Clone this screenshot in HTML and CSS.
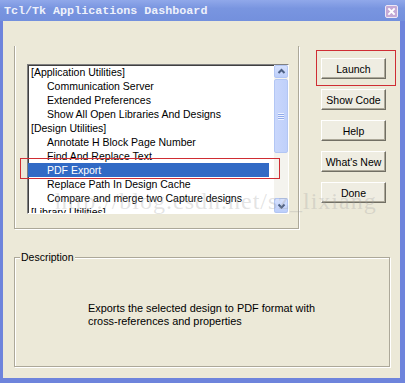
FILE: index.html
```
<!DOCTYPE html>
<html lang="en">
<head>
    <meta charset="UTF-8">
    <meta name="viewport" content="width=device-width, initial-scale=1.0">
    <title>Tcl/Tk Applications Dashboard</title>
    <link rel="stylesheet" href="styles.css">
</head>
<body>
    <div class="window">
        <div class="titlebar">
            <span class="title">Tcl/Tk Applications Dashboard</span>
            <span class="close">
                <svg width="11" height="11" viewBox="0 0 11 11">
                    <path d="M3 3 L8 8 M8 3 L3 8" stroke="#fff" stroke-width="1.8" stroke-linecap="square"/>
                </svg>
            </span>
        </div>

        <div class="client">
            <div class="top-row">
                <div class="apps-frame">
                    <div class="listbox">
                        <ul class="items">
                            <li class="group">[Application Utilities]</li>
                            <li>Communication Server</li>
                            <li>Extended Preferences</li>
                            <li>Show All Open Libraries And Designs</li>
                            <li class="group">[Design Utilities]</li>
                            <li>Annotate H Block Page Number</li>
                            <li>Find And Replace Text</li>
                            <li class="selected">PDF Export</li>
                            <li>Replace Path In Design Cache</li>
                            <li>Compare and merge two Capture designs</li>
                            <li class="group">[Library Utilities]</li>
                        </ul>
                        <div class="scrollbar">
                            <div class="sb-btn">
                                <svg width="11" height="11" viewBox="0 0 11 11">
                                    <path d="M2.5 7 L5.5 4 L8.5 7" fill="none" stroke="#4d6185" stroke-width="2"/>
                                </svg>
                            </div>
                            <div class="sb-thumb">
                                <span class="grip"></span>
                            </div>
                            <div class="sb-track"></div>
                            <div class="sb-btn sb-down">
                                <svg width="11" height="11" viewBox="0 0 11 11">
                                    <path d="M2.5 4.5 L5.5 7.5 L8.5 4.5" fill="none" stroke="#4d6185" stroke-width="2"/>
                                </svg>
                            </div>
                        </div>
                    </div>
                </div>

                <div class="buttons">
                    <button class="btn">Launch</button>
                    <button class="btn">Show Code</button>
                    <button class="btn">Help</button>
                    <button class="btn">What's New</button>
                    <button class="btn">Done</button>
                </div>
            </div>

            <div class="desc-frame">
                <span class="desc-label">Description</span>
                <p class="desc-text">Exports the selected design to PDF format with<br>cross-references and properties</p>
            </div>

            <!-- annotations drawn over the screenshot -->
            <div class="watermark">http://blog.csdn.net/sz_lixiang</div>
            <div class="mark mark-launch"></div>
            <div class="mark mark-pdf"></div>
        </div>
    </div>
</body>
</html>
```

FILE: styles.css
```
body {
    margin: 0;
    width: 405px;
    height: 383px;
    overflow: hidden;
    font-family: "Liberation Sans", Arial, sans-serif;
    font-size: 10.5px;
    color: #000;
}
.window {
    width: 405px;
    height: 383px;
    display: flex;
    flex-direction: column;
    background: #6e84dc;
}
.titlebar {
    height: 21px;
    display: flex;
    align-items: center;
    justify-content: space-between;
    padding: 0 7px 0 4px;
    background: linear-gradient(#90a8ea, #7995e0 40%, #7390dd);
}
.title {
    font-family: "Liberation Mono", monospace;
    font-weight: bold;
    font-size: 11.7px;
    color: #eef1fb;
    padding-top: 1px;
}
.close {
    width: 11px;
    height: 11px;
    margin-top: 1px;
    background: #c4a9d6;
    border: 1px solid #eee8f6;
    border-radius: 2px;
    display: flex;
}
.client {
    position: relative;
    flex: 1;
    margin: 0 5px 5px 3px;
    background: #ece9d8;
    padding-top: 25px;
}
.top-row {
    display: flex;
    align-items: flex-start;
}
.apps-frame {
    width: 285px;
    height: 183px;
    margin-left: 11px;
    padding: 18px 0 0 12px;
    box-sizing: border-box;
    border: 1px solid #aca899;
    border-top: none;
    box-shadow: inset 1px 0 #fff, 1px 1px #fff;
}
.listbox {
    width: 262px;
    height: 150px;
    box-sizing: border-box;
    display: flex;
    background: #fff;
    border: 1px solid;
    border-color: #808080 #fff #fff #808080;
    box-shadow: inset 1px 1px #404040;
}
.items {
    flex: 1;
    list-style: none;
    margin: 0 5px 0 0;
    padding: 0;
    overflow: hidden;
}
.items li {
    height: 14px;
    line-height: 14px;
    padding-left: 19px;
    white-space: nowrap;
}
.items li.group {
    padding-left: 3px;
}
.items li.selected {
    background: #316ac5;
    color: #fff;
}
.scrollbar {
    width: 14px;
    display: flex;
    flex-direction: column;
    background: #f4f3ee;
}
.sb-btn {
    height: 13px;
    box-sizing: border-box;
    border: 1px solid #b2c6f4;
    border-radius: 2px;
    background: linear-gradient(#d6e1fd, #bccefa);
    display: flex;
    align-items: center;
    justify-content: center;
}
.sb-down {
    height: 15px;
}
.sb-thumb {
    height: 74px;
    margin-top: 1px;
    box-sizing: border-box;
    border: 1px solid #b2c6f4;
    border-radius: 2px;
    background: linear-gradient(90deg, #c9d7fc, #bfd0fa);
    display: flex;
    align-items: center;
    justify-content: center;
}
.grip {
    width: 6px;
    height: 7px;
    background: repeating-linear-gradient(#eef3ff 0 1px, #8fa9ea 1px 2px);
}
.sb-track {
    flex: 1;
}
.buttons {
    display: flex;
    flex-direction: column;
    gap: 10px;
    margin: 12px 0 0 22px;
}
.btn {
    width: 65px;
    height: 21px;
    padding: 0;
    font-family: "Liberation Sans", Arial, sans-serif;
    font-size: 10.5px;
    color: #000;
    background: #efede2;
    border: 1px solid;
    border-color: #fff #716f64 #716f64 #fff;
    box-shadow: inset -1px -1px #aca899;
}
.desc-frame {
    position: relative;
    width: 376px;
    height: 110px;
    margin: 28px 0 0 11px;
    box-sizing: border-box;
    border: 1px solid #aca899;
    box-shadow: inset 1px 1px #fff, 1px 1px #fff;
}
.desc-label {
    position: absolute;
    left: 5px;
    top: -7px;
    padding: 0 1px;
    background: #ece9d8;
    line-height: 13px;
}
.desc-text {
    margin: 44px 0 0 73px;
    font-size: 10.9px;
    line-height: 13px;
}
.watermark {
    position: absolute;
    left: 52px;
    top: 167px;
    font-family: "Liberation Serif", serif;
    font-size: 24px;
    letter-spacing: 1px;
    color: rgba(160, 160, 160, 0.3);
    white-space: nowrap;
}
.mark {
    position: absolute;
    border: 1px solid #cf2d33;
}
.mark-launch {
    left: 313px;
    top: 29px;
    width: 78px;
    height: 34px;
}
.mark-pdf {
    left: 17px;
    top: 137px;
    width: 258px;
    height: 19px;
}
```
